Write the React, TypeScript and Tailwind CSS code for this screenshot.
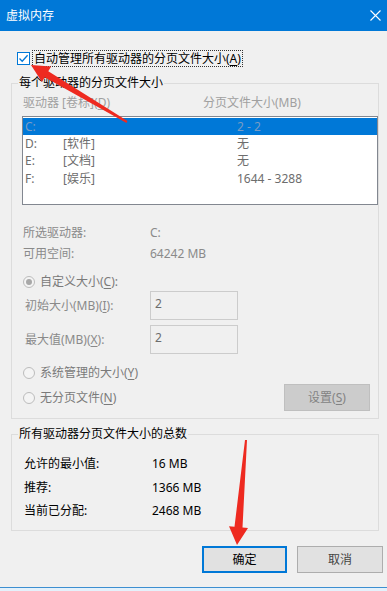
import React from "react";

const U = ({ c }: { c: string }) => <span className="underline underline-offset-[2px]">{c}</span>;

function Radio({ checked }: { checked?: boolean }) {
  return (
    <span className="w-[12px] h-[12px] rounded-full border border-[#bcbcbc] bg-[#f4f4f4] flex items-center justify-center shrink-0">
      {checked && <span className="w-[6px] h-[6px] rounded-full bg-[#a8a8a8]" />}
    </span>
  );
}

export default function App() {
  const rows = [
    { d: "C:", l: "", s: "2 - 2", sel: true },
    { d: "D:", l: "[软件]", s: "无" },
    { d: "E:", l: "[文档]", s: "无" },
    { d: "F:", l: "[娱乐]", s: "1644 - 3288" },
  ];
  return (
    <div className="w-[387px] h-[591px] bg-[#f0f0f0] relative overflow-hidden font-['Noto_Sans','Noto_Sans_CJK_SC',sans-serif] text-[12px] leading-[16px] text-black">
      {/* title bar */}
      <div className="h-[31px] bg-[#0078d7] flex items-center justify-between pl-[6px] pr-[5px] text-white text-[12px]">
        <span>虚拟内存</span>
        <svg width="11" height="11" viewBox="0 0 11 11" className="mr-[1px]">
          <path d="M0.5 0.5 L10.5 10.5 M10.5 0.5 L0.5 10.5" stroke="white" strokeWidth="1.1" />
        </svg>
      </div>

      <div className="pl-[11px]">
        {/* checkbox row */}
        <div className="mt-[19px] h-[17px] flex items-center pl-[6px]">
          <span className="w-[13px] h-[13px] border border-[#0078d7] bg-white flex items-center justify-center shrink-0">
            <svg width="11" height="11" viewBox="0 0 11 11">
              <path d="M1.5 5.5 L4.2 8.3 L9.6 2.3" stroke="#0078d7" strokeWidth="1.3" fill="none" />
            </svg>
          </span>
          <span className="ml-[2px] h-[17px] flex items-center px-[1px] border border-dotted border-[#333]">
            自动管理所有驱动器的分页文件大小(<U c="A" />)
          </span>
        </div>

        {/* group 1 */}
        <div className="relative mt-[16px] w-[368px] h-[336px] border border-[#dcdcdc]">
          <span className="absolute -top-[9px] left-[6px] px-[1px] bg-[#f0f0f0] leading-[16px]">每个驱动器的分页文件大小</span>
          <div className="mt-[11px] h-[16px] flex pl-[11px] text-[#a0a0a0]">
            <span className="w-[180px] shrink-0">驱动器 [卷标](<U c="D" />)</span>
            <span>分页文件大小(MB)</span>
          </div>
          <div className="mt-[5px] ml-[10px] w-[356px] h-[89px] border border-[#828790] bg-white pt-[1px] text-[#6d6d6d]">
            {rows.map((r) => (
              <div
                key={r.d}
                className={`h-[17.3px] flex items-center pl-[2px] ${r.sel ? "bg-[#0078d7] text-[#7a9cc4]" : ""}`}
              >
                <span className="w-[38px] shrink-0">{r.d}</span>
                <span className="w-[174px] shrink-0">{r.l}</span>
                <span>{r.s}</span>
              </div>
            ))}
          </div>

          <div className="mt-[20px] h-[16px] flex pl-[11px] text-[#8a8a8a]">
            <span className="w-[127px] shrink-0">所选驱动器:</span>
            <span>C:</span>
          </div>
          <div className="mt-[5px] h-[16px] flex pl-[11px] text-[#8a8a8a]">
            <span className="w-[127px] shrink-0">可用空间:</span>
            <span>64242 MB</span>
          </div>

          <div className="mt-[12px] h-[16px] flex items-center pl-[11px] text-[#7a7a7a]">
            <Radio checked />
            <span className="ml-[5px]">自定义大小(<U c="C" />):</span>
          </div>

          <div className="mt-[1px] h-[29px] flex items-center pl-[13px] text-[#8a8a8a]">
            <span className="w-[125px] shrink-0">初始大小(MB)(<U c="I" />):</span>
            <div className="w-[88px] h-[29px] border border-[#cccccc] pl-[4px] pt-[4px] text-[#6d6d6d]">2</div>
          </div>
          <div className="mt-[5px] h-[29px] flex items-center pl-[13px] text-[#8a8a8a]">
            <span className="w-[125px] shrink-0">最大值(MB)(<U c="X" />):</span>
            <div className="w-[88px] h-[29px] border border-[#cccccc] pl-[4px] pt-[4px] text-[#6d6d6d]">2</div>
          </div>

          <div className="mt-[11px] h-[16px] flex items-center pl-[11px] text-[#7a7a7a]">
            <Radio />
            <span className="ml-[5px]">系统管理的大小(<U c="Y" />)</span>
          </div>

          <div className="mt-[3px] h-[27px] flex items-center justify-between pl-[11px] pr-[8px]">
            <div className="flex items-center text-[#7a7a7a]">
              <Radio />
              <span className="ml-[5px]">无分页文件(<U c="N" />)</span>
            </div>
            <div className="w-[86px] h-[27px] bg-[#cccccc] border border-[#bfbfbf] flex items-center justify-center text-[#838383]">
              设置(<U c="S" />)
            </div>
          </div>
        </div>

        {/* group 2 */}
        <div className="relative mt-[15px] w-[368px] h-[97px] border border-[#dcdcdc]">
          <span className="absolute -top-[9px] left-[6px] px-[1px] bg-[#f0f0f0] leading-[16px]">所有驱动器分页文件大小的总数</span>
          <div className="mt-[21px] h-[16px] flex pl-[12px]">
            <span className="w-[128px] shrink-0">允许的最小值:</span>
            <span>16 MB</span>
          </div>
          <div className="mt-[8px] h-[16px] flex pl-[12px]">
            <span className="w-[128px] shrink-0">推荐:</span>
            <span>1366 MB</span>
          </div>
          <div className="mt-[7px] h-[16px] flex pl-[12px]">
            <span className="w-[128px] shrink-0">当前已分配:</span>
            <span>2468 MB</span>
          </div>
        </div>

        {/* buttons */}
        <div className="mt-[15px] h-[27px] flex justify-end gap-[10px] pr-[4px]">
          <div className="w-[85px] h-[27px] border-2 border-[#0078d7] bg-[#e1e1e1] flex items-center justify-center">确定</div>
          <div className="w-[86px] h-[27px] border border-[#adadad] bg-[#e1e1e1] flex items-center justify-center text-[#444]">取消</div>
        </div>
      </div>

      {/* bottom window edge */}
      <div className="mt-[14px] h-[1px] bg-[#3d8fd1]" />
      <div className="h-[4px] bg-[#e4f1fb]" />

      {/* annotation arrows */}
      <svg className="absolute left-0 top-0 pointer-events-none" width="387" height="591" viewBox="0 0 387 591">
        <polygon
          points="31,65 51.1,66.5 48.3,71.2 127.5,121.1 126.5,122.9 44.7,77.2 41.9,81.9"
          fill="#ee2a20"
        />
        <polygon
          points="237,545 248,527.9 242.5,527.4 247,440.1 245,439.9 234.5,526.8 229,526.3"
          fill="#ee2a20"
        />
      </svg>
    </div>
  );
}
